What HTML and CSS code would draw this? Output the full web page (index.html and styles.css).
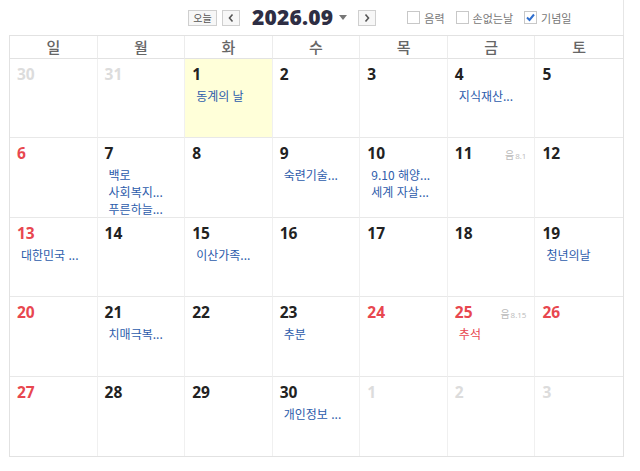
FILE: index.html
```html
<!DOCTYPE html>
<html lang="ko">
<head>
<meta charset="utf-8">
<link rel="stylesheet" href="styles.css">
</head>
<body>
<div class="topbar">
  <div class="nav">
    <button class="btn today">오늘</button>
    <button class="btn arrow"><svg width="8" height="10" viewBox="0 0 8 10"><path d="M5.5 1.5 L2.5 5 L5.5 8.5" fill="none" stroke="#555" stroke-width="1.6"/></svg></button>
    <span class="title">2026.09</span>
    <span class="caret"></span>
    <button class="btn arrow next"><svg width="8" height="10" viewBox="0 0 8 10"><path d="M2.5 1.5 L5.5 5 L2.5 8.5" fill="none" stroke="#555" stroke-width="1.6"/></svg></button>
  </div>
  <div class="opts">
    <label class="opt"><span class="box"></span>음력</label>
    <label class="opt"><span class="box"></span>손없는날</label>
    <label class="opt"><span class="box on"><svg width="11" height="11" viewBox="0 0 11 11"><path d="M2 5.5 L4.5 8 L9 2.5" fill="none" stroke="#2f6fcf" stroke-width="2"/></svg></span>기념일</label>
  </div>
</div>
<div class="cal">
  <div class="dow">일</div><div class="dow">월</div><div class="dow">화</div><div class="dow">수</div><div class="dow">목</div><div class="dow">금</div><div class="dow last">토</div>

  <div class="cell"><span class="num other">30</span></div>
  <div class="cell"><span class="num other">31</span></div>
  <div class="cell today-cell"><span class="num">1</span><div class="ev">동계의 날</div></div>
  <div class="cell"><span class="num">2</span></div>
  <div class="cell"><span class="num">3</span></div>
  <div class="cell"><span class="num">4</span><div class="ev">지식재산...</div></div>
  <div class="cell last"><span class="num">5</span></div>

  <div class="cell"><span class="num sun">6</span></div>
  <div class="cell"><span class="num">7</span><div class="ev">백로</div><div class="ev">사회복지...</div><div class="ev">푸른하늘...</div></div>
  <div class="cell"><span class="num">8</span></div>
  <div class="cell"><span class="num">9</span><div class="ev">숙련기술...</div></div>
  <div class="cell"><span class="num">10</span><div class="ev">9.10 해양...</div><div class="ev">세계 자살...</div></div>
  <div class="cell"><div class="row"><span class="num">11</span><span class="lunar">음<small>8.1</small></span></div></div>
  <div class="cell last"><span class="num">12</span></div>

  <div class="cell"><span class="num sun">13</span><div class="ev">대한민국 ...</div></div>
  <div class="cell"><span class="num">14</span></div>
  <div class="cell"><span class="num">15</span><div class="ev">이산가족...</div></div>
  <div class="cell"><span class="num">16</span></div>
  <div class="cell"><span class="num">17</span></div>
  <div class="cell"><span class="num">18</span></div>
  <div class="cell last"><span class="num">19</span><div class="ev">청년의날</div></div>

  <div class="cell"><span class="num sun">20</span></div>
  <div class="cell"><span class="num">21</span><div class="ev">치매극복...</div></div>
  <div class="cell"><span class="num">22</span></div>
  <div class="cell"><span class="num">23</span><div class="ev">추분</div></div>
  <div class="cell"><span class="num sun">24</span></div>
  <div class="cell"><div class="row"><span class="num sun">25</span><span class="lunar">음<small>8.15</small></span></div><div class="ev red">추석</div></div>
  <div class="cell last"><span class="num sun">26</span></div>

  <div class="cell bottom"><span class="num sun">27</span></div>
  <div class="cell bottom"><span class="num">28</span></div>
  <div class="cell bottom"><span class="num">29</span></div>
  <div class="cell bottom"><span class="num">30</span><div class="ev">개인정보 ...</div></div>
  <div class="cell bottom"><span class="num other">1</span></div>
  <div class="cell bottom"><span class="num other">2</span></div>
  <div class="cell bottom last"><span class="num other">3</span></div>
</div>
</body>
</html>
```
FILE: styles.css
```css
* { box-sizing: border-box; }
html, body { margin: 0; padding: 0; background: #fff; }
body {
  width: 640px;
  height: 471px;
  font-family: "Noto Sans", "Noto Sans CJK KR", sans-serif;
  overflow: hidden;
}
.topbar {
  height: 35px;
  display: flex;
  align-items: center;
  padding-left: 188px;
  width: 624px;
  border-right: 1px solid #e6e6e6;
}
.nav { display: flex; align-items: center; }
.btn {
  height: 16px;
  border: 1px solid #cfcfcf;
  background: #f7f7f7;
  padding: 0;
  margin: 0;
  display: flex;
  align-items: center;
  justify-content: center;
  font-family: "Noto Sans CJK KR", sans-serif;
  color: #555;
}
.today { width: 29px; font-size: 10px; }
.arrow { width: 18px; margin-left: 5px; }
.arrow.next { margin-left: 11px; }
.title {
  margin-left: 12px;
  font-family: "Open Sans", "Noto Sans", sans-serif;
  font-weight: 800;
  font-size: 21px;
  color: #2e2e44;
  letter-spacing: 0.2px;
  line-height: 1;
}
.caret {
  margin-left: 6px;
  width: 0; height: 0;
  border-left: 4px solid transparent;
  border-right: 4px solid transparent;
  border-top: 5px solid #777;
}
.opts { display: flex; align-items: center; margin-left: 31px; }
.opt {
  display: flex;
  align-items: center;
  font-family: "Noto Sans CJK KR", sans-serif;
  font-size: 11px;
  color: #777;
  margin-right: 11px;
}
.box {
  width: 13px; height: 13px;
  border: 1px solid #c8c8c8;
  background: #fff;
  margin-right: 4px;
  display: flex;
  align-items: center;
  justify-content: center;
}
.cal {
  margin-left: 9px;
  width: 615px;
  height: 422px;
  border: 1px solid #e2e2e2;
  display: grid;
  grid-template-columns: repeat(7, 1fr);
  grid-template-rows: 23px repeat(5, 1fr);
}
.dow {
  border-right: 1px solid #ececec;
  border-bottom: 1px solid #e2e2e2;
  text-align: center;
  font-family: "Noto Sans CJK KR", sans-serif;
  font-size: 15px;
  font-weight: 500;
  color: #666;
  line-height: 21px;
}
.cell {
  border-right: 1px solid #f0f0f0;
  border-bottom: 1px solid #e8e8e8;
  padding: 4px 8px 0 7px;
  overflow: hidden;
}
.last { border-right: none; }
.bottom { border-bottom: none; }
.today-cell { background: #ffffd9; }
.row { display: flex; justify-content: space-between; align-items: baseline; }
.num {
  display: block;
  font-family: "Open Sans", "Noto Sans", sans-serif;
  font-weight: 700;
  font-size: 15.5px;
  line-height: 22px;
  color: #222;
  margin-bottom: 2px;
}
.num.sun { color: #e8474f; }
.num.other { color: #dcdcdc; }
.lunar {
  font-family: "Noto Sans CJK KR", sans-serif;
  font-size: 10px;
  color: #bbb;
  padding-right: 0;
}
.lunar small { font-family: "Open Sans", sans-serif; font-size: 8px; margin-left: 1px; }
.ev {
  font-family: "Noto Sans CJK KR", sans-serif;
  font-size: 12px;
  line-height: 17px;
  color: #2d5cab;
  padding-left: 4px;
  white-space: nowrap;
}
.ev.red { color: #e8474f; }
```
